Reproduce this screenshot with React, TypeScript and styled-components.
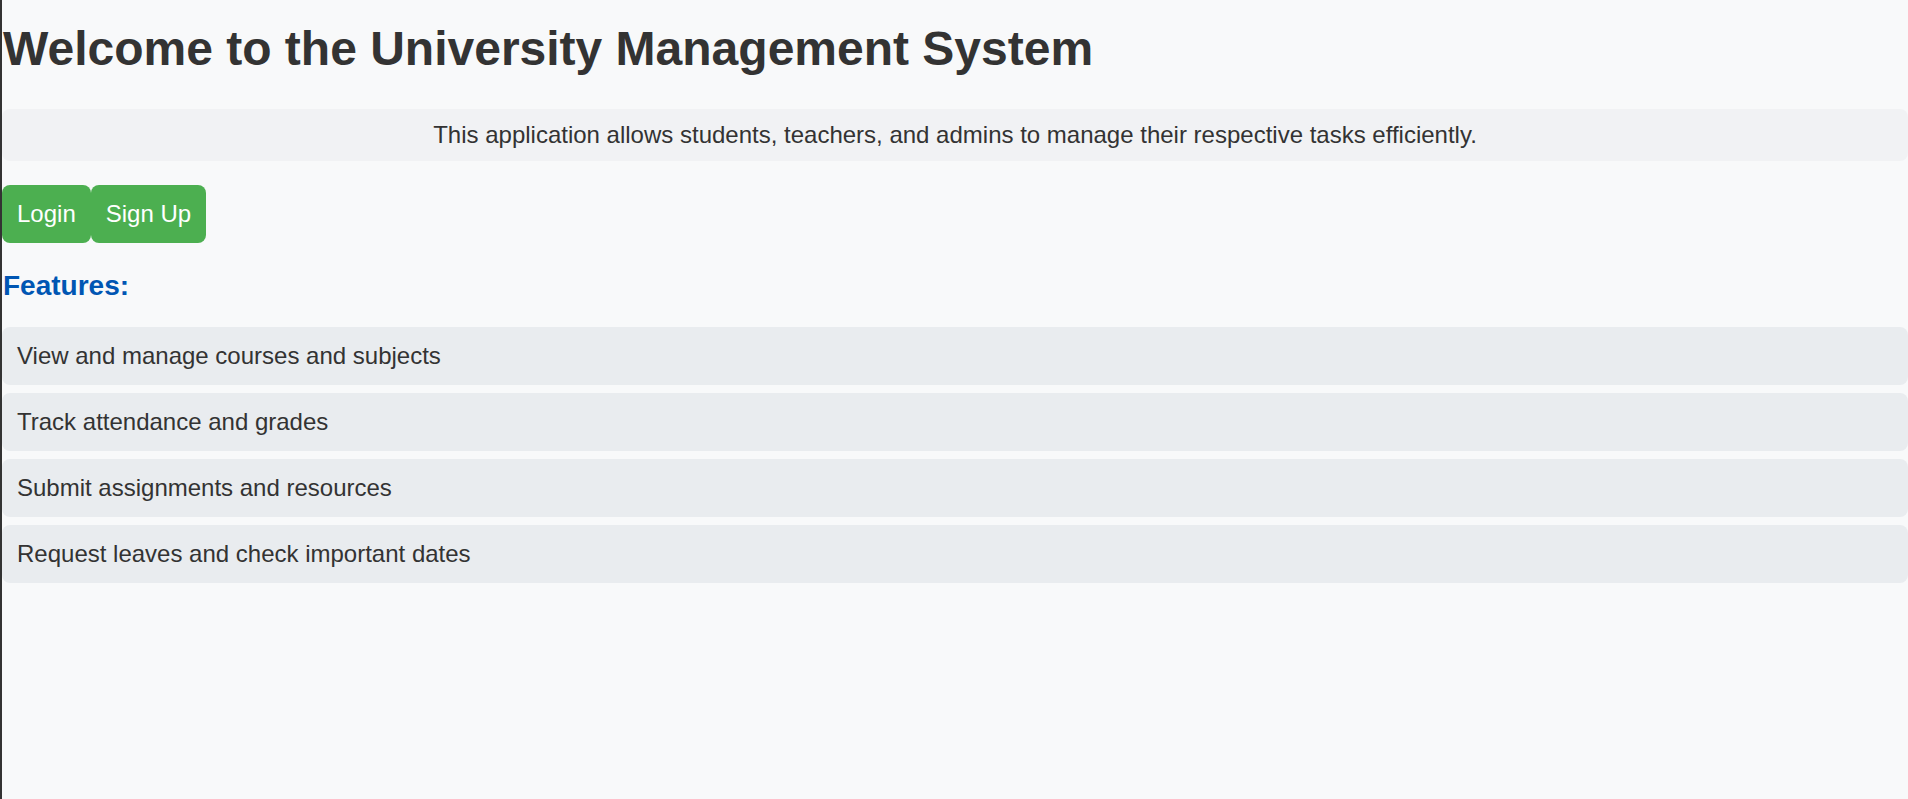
import React from 'react'
import styled, { createGlobalStyle } from 'styled-components'

const GlobalStyle = createGlobalStyle`
    html, body {
        margin: 0;
        padding: 0;
        background-color: #f8f9fa;
    }
    body {
        font-family: 'Liberation Sans', Arial, sans-serif;
        color: #333333;
    }
`

const Page = styled.div`
    min-height: 100vh;
    box-sizing: border-box;
    border-left: 2px solid #333333;
    padding: 21px 0 0 0;
    display: flex;
    flex-direction: column;
    align-items: stretch;
`
const Title = styled.h1`
    margin: 0 0 33px 1px;
    font-size: 48px;
    font-weight: 700;
    color: #333333;
`
const Notice = styled.p`
    margin: 0 0 24px;
    padding: 12px;
    border-radius: 8px;
    background-color: #f1f2f4;
    font-family: 'Liberation Sans Narrow', 'Arial Narrow', 'Liberation Sans', sans-serif;
    font-size: 24px;
    text-align: center;
    color: #333333;
`
const ButtonRow = styled.div`
    display: flex;
    margin-bottom: 27px;
`
const ActionButton = styled.button`
    padding: 15px 15px;
    border: none;
    border-radius: 8px;
    background-color: #4caf50;
    color: #ffffff;
    font-family: 'Liberation Sans', Arial, sans-serif;
    font-size: 24px;
    line-height: normal;
    cursor: pointer;
`
const SectionTitle = styled.h2`
    margin: 0 0 25px 1px;
    font-size: 28px;
    font-weight: 700;
    color: #0056b3;
`
const FeatureList = styled.ul`
    list-style: none;
    margin: 0;
    padding: 0;
    display: flex;
    flex-direction: column;
    gap: 8px;
`
const FeatureItem = styled.li`
    padding: 15px 15px;
    border-radius: 8px;
    background-color: #e9ecef;
    font-size: 24px;
    color: #333333;
`

const features = [
    'View and manage courses and subjects',
    'Track attendance and grades',
    'Submit assignments and resources',
    'Request leaves and check important dates',
]

const App = () => {
    return (
        <>
            <GlobalStyle />
            <Page>
                <Title>Welcome to the University Management System</Title>
                <Notice>
                    This application allows students, teachers, and admins to manage their
                    respective tasks efficiently.
                </Notice>
                <ButtonRow>
                    <ActionButton>Login</ActionButton>
                    <ActionButton>Sign Up</ActionButton>
                </ButtonRow>
                <SectionTitle>Features:</SectionTitle>
                <FeatureList>
                    {features.map((feature) => (
                        <FeatureItem key={feature}>{feature}</FeatureItem>
                    ))}
                </FeatureList>
            </Page>
        </>
    )
}

export default App
